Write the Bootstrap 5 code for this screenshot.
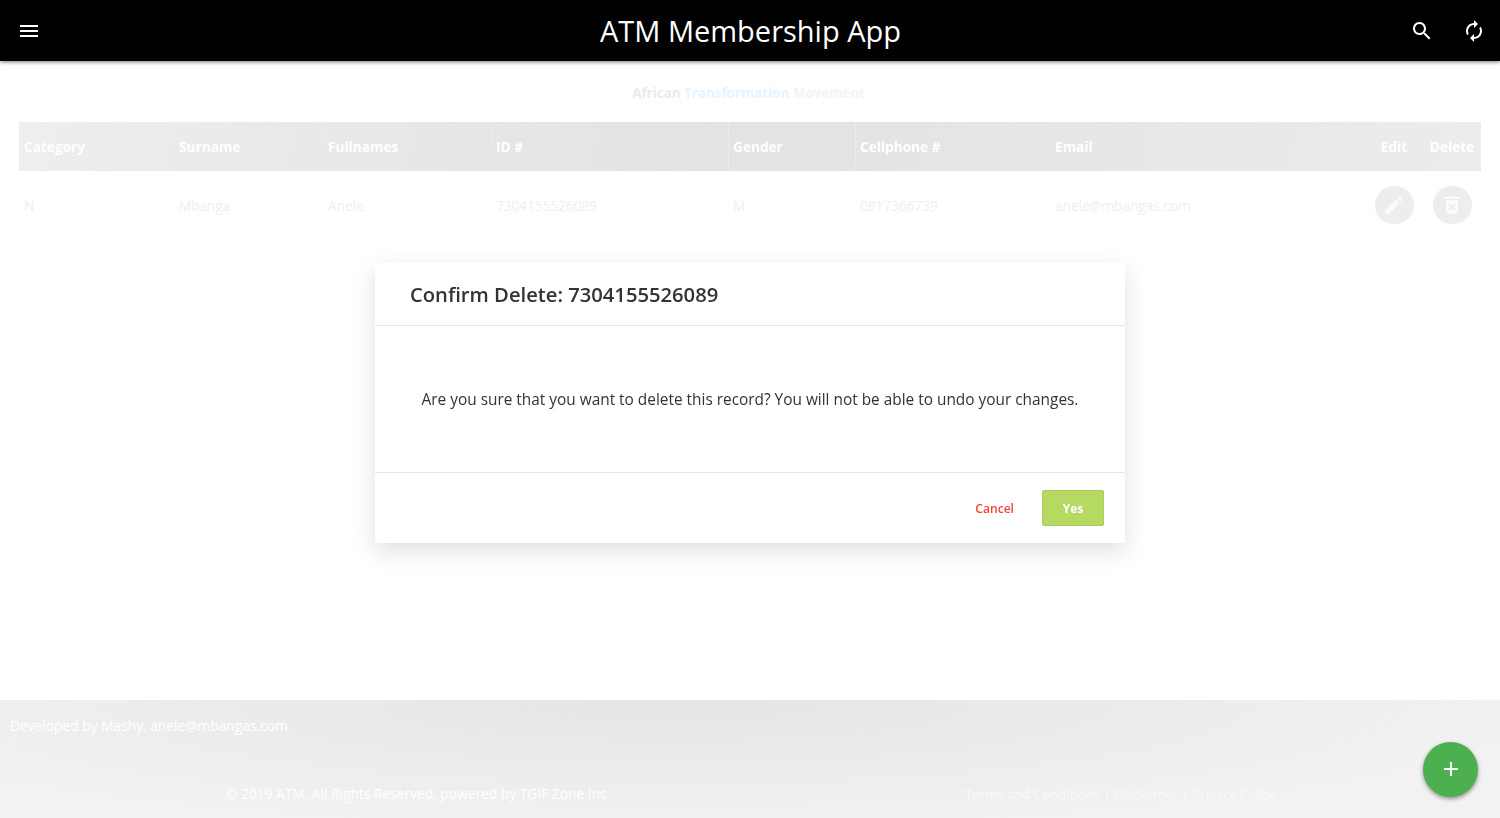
<!DOCTYPE html>
<html lang="en">
<head>
<meta charset="utf-8">
<title>ATM Membership App</title>
<link href="https://cdn.jsdelivr.net/npm/bootstrap@5.3.0/dist/css/bootstrap.min.css" rel="stylesheet">
<style>
html,body{height:100%;overflow:hidden}
body{font-family:"Open Sans","Noto Sans",sans-serif;background:#fff;color:#333;display:flex;flex-direction:column;height:818px}
.app-bar{background:#000;height:61px;box-shadow:0 1px 4px rgba(0,0,0,.55);position:relative;z-index:2;padding:0 14px 0 17px}
.app-title{font-size:29px;line-height:64px;color:#fff;margin:0;font-weight:400;flex:1;text-align:center;padding-left:78px}
.ico{width:24px;height:24px;fill:currentColor;display:block}
.bar-ico{color:#fff;margin-left:28px}
.ico-flip{transform:scaleX(-1)}
.page-main{flex:1;padding:22px 19px 0}
.org-name{font-size:13.4px;font-weight:700;text-align:center;line-height:20px;margin:0 0 19px;color:#ebebeb;padding-right:3px}
.org-blue{color:#e8f3fd}.org-green{color:#eef8ef}
.member-table{table-layout:fixed;width:1462px;margin:0;border-collapse:separate;border-spacing:0;--bs-table-bg:transparent;--bs-table-border-color:transparent}
.member-table thead{background:linear-gradient(100deg,#eeeeee 0%,#e3e3e3 45%,#e4e4e4 60%,#ececec 100%)}
.member-table th{color:#fff;font-size:13.65px;font-weight:700;height:49px;padding:2px 5px 0 4px;vertical-align:middle;border-left:1px solid #ebebeb;border-bottom:0}
.member-table th:first-child{border-left:0;padding-left:5px}
.member-table td{color:#efefef;font-size:13.6px;height:69px;padding:2px 5px 0;vertical-align:middle;border:0}
.w1{width:155px}.w2{width:149px}.w3{width:168px}.w4{width:237px}.w5{width:127px}.w6{width:195px}.w7{width:315px}.w8{width:58px}.w9{width:58px}
.round-act{width:39px;height:38px;border-radius:50%;background:#ededed;border:0;padding:0;color:#fafafa;display:flex;align-items:center;justify-content:center;margin:0 auto;box-shadow:0 0 2px rgba(0,0,0,.03)}
.member-table td.cell-act{padding:0 0 2px}
.page-foot{height:118px;background:radial-gradient(ellipse 900px 130px at 45% 0,#e5e5e5 0%,#f2f2f2 100%);color:#fff;font-size:13.78px;line-height:20px;padding:16px 0 0 10px}
.foot-row{margin-top:48px}
.copy-line{padding-left:216px;width:955px}
.term-line{color:#f4fbfe;font-size:13.18px}
.del-modal{display:block;background:transparent;pointer-events:none}
.del-dialog{max-width:750px;width:750px;margin:263px auto 0;pointer-events:auto}
.del-box{border:0;border-radius:2px;height:280px;box-shadow:0 8px 24px rgba(0,0,0,.13)}
.del-head{height:63px;padding:1px 35px 0;border-bottom:1px solid #e5e5e5;border-radius:0}
.del-head h5{font-size:20.2px;font-weight:600;color:#333;margin:0}
.del-body{height:146px;padding:2px 0 0;flex:none;display:flex;align-items:center;justify-content:center;font-size:15.4px;color:#333;margin:0}
.del-foot{border-top:1px solid #e5e5e5;padding:0 21px 0 0;flex:1;gap:0;border-radius:0}
.btn-cancel{font-size:12.1px;font-weight:600;color:#f44336;background:none;border:0;padding:2px 0 0;margin:0 28px 0 0;--bs-btn-hover-color:#f44336}
.btn-yes{width:62px;height:36px;font-size:12px;font-weight:700;color:#fff;background:#b5d961;border:1px solid #a9d05a;border-radius:2px;padding:2px 0 0;margin:0}
.fab-add{position:fixed;left:1423px;top:742px;width:55px;height:55px;border-radius:50%;background:#4caf50;border:0;color:#fff;display:flex;align-items:center;justify-content:center;box-shadow:0 2px 4px rgba(0,0,0,.4);z-index:1060;padding:0 0 2px}
</style>
</head>
<body>
<header class="app-bar d-flex align-items-center">
  <svg class="ico text-white" viewBox="0 0 24 24"><path d="M3 18h18v-2H3v2zm0-5h18v-2H3v2zm0-7v2h18V6H3z"/></svg>
  <h1 class="app-title">ATM Membership App</h1>
  <svg class="ico bar-ico" viewBox="0 0 24 24"><path d="M15.5 14h-.79l-.28-.27C15.41 12.59 16 11.11 16 9.5 16 5.91 13.09 3 9.5 3S3 5.91 3 9.5 5.91 16 9.5 16c1.61 0 3.09-.59 4.23-1.57l.27.28v.79l5 4.99L20.49 19l-4.99-5zm-6 0C7.01 14 5 11.99 5 9.5S7.01 5 9.5 5 14 7.01 14 9.5 11.99 14 9.5 14z"/></svg>
  <svg class="ico bar-ico ico-flip" viewBox="0 0 24 24"><path d="M12 4V1L8 5l4 4V6c3.31 0 6 2.69 6 6 0 1.01-.25 1.97-.7 2.8l1.46 1.46C19.54 15.03 20 13.57 20 12c0-4.42-3.58-8-8-8zm0 14c-3.31 0-6-2.69-6-6 0-1.01.25-1.97.7-2.8L5.24 7.74C4.46 8.97 4 10.43 4 12c0 4.42 3.58 8 8 8v3l4-4-4-4v3z"/></svg>
</header>
<main class="page-main">
  <p class="org-name">African <span class="org-blue">Transformation</span> <span class="org-green">Movement</span></p>
  <table class="table member-table">
    <colgroup><col class="w1"><col class="w2"><col class="w3"><col class="w4"><col class="w5"><col class="w6"><col class="w7"><col class="w8"><col class="w9"></colgroup>
    <thead><tr><th>Category</th><th>Surname</th><th>Fullnames</th><th>ID #</th><th>Gender</th><th>Cellphone #</th><th>Email</th><th class="text-center">Edit</th><th class="text-center">Delete</th></tr></thead>
    <tbody><tr><td>N</td><td>Mbanga</td><td>Anele</td><td>7304155526089</td><td>M</td><td>0817366739</td><td>anele@mbangas.com</td>
      <td class="cell-act"><button class="round-act" type="button" aria-label="Edit"><svg class="ico" viewBox="0 0 24 24"><path d="M3 17.25V21h3.75L17.81 9.94l-3.75-3.75L3 17.25zM20.71 7.04c.39-.39.39-1.02 0-1.41l-2.34-2.34c-.39-.39-1.02-.39-1.41 0l-1.83 1.83 3.75 3.75 1.83-1.83z"/></svg></button></td>
      <td class="cell-act"><button class="round-act" type="button" aria-label="Delete"><svg class="ico" viewBox="0 0 24 24"><path d="M6 19c0 1.1.9 2 2 2h8c1.1 0 2-.9 2-2V7H6v12zm2.46-7.12l1.41-1.41L12 12.59l2.12-2.12 1.41 1.41L13.41 14l2.12 2.12-1.41 1.41L12 15.41l-2.12 2.12-1.41-1.41L10.59 14l-2.13-2.12zM15.5 4l-1-1h-5l-1 1H5v2h14V4z"/></svg></button></td></tr></tbody>
  </table>
</main>
<footer class="page-foot">
  <div>Developed by Mashy, anele@mbangas.com</div>
  <div class="foot-row d-flex"><div class="copy-line">© 2019 ATM, All Rights Reserved, powered by TGIF Zone Inc</div><div class="term-line">Terms and Conditions | Disclaimer | Privacy Policy</div></div>
</footer>
<div class="modal del-modal" tabindex="-1">
  <div class="modal-dialog del-dialog">
    <div class="modal-content del-box">
      <div class="modal-header del-head"><h5 class="modal-title">Confirm Delete: 7304155526089</h5></div>
      <div class="modal-body del-body">Are you sure that you want to delete this record? You will not be able to undo your changes.</div>
      <div class="modal-footer del-foot"><button class="btn btn-cancel" type="button">Cancel</button><button class="btn btn-yes" type="button">Yes</button></div>
    </div>
  </div>
</div>
<button class="fab-add" type="button" aria-label="Add"><svg class="ico" viewBox="0 0 24 24"><path d="M19 13h-6v6h-2v-6H5v-2h6V5h2v6h6v2z"/></svg></button>
<script src="https://cdn.jsdelivr.net/npm/bootstrap@5.3.0/dist/js/bootstrap.bundle.min.js"></script>
</body>
</html>
